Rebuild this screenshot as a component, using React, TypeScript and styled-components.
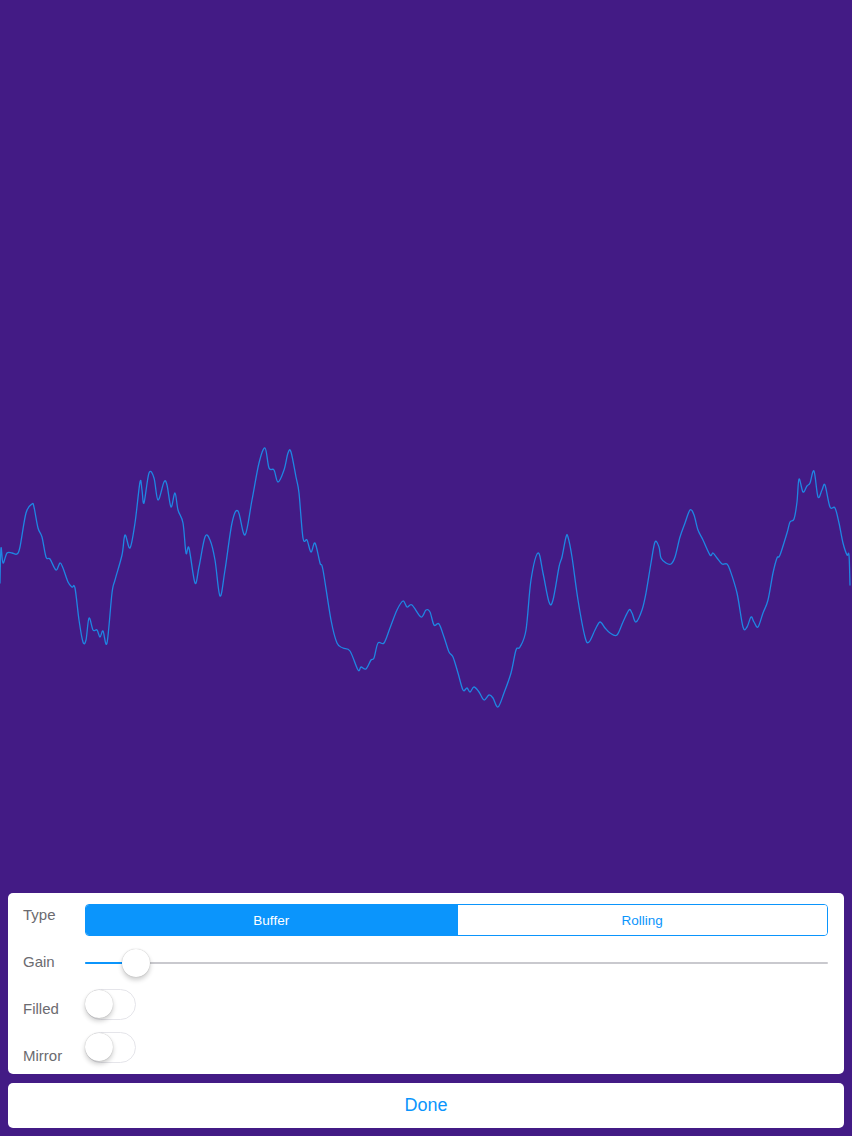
import React from "react";
import styled, { createGlobalStyle } from "styled-components";

const GlobalStyle = createGlobalStyle`
  html, body { margin: 0; padding: 0; }
  body {
    background: #431b85;
    font-family: "Helvetica Neue", "Liberation Sans", Arial, sans-serif;
    -webkit-font-smoothing: antialiased;
  }
`;

const BLUE = "#0b95fc";

const Page = styled.div`
  width: 852px;
  height: 1136px;
  display: flex;
  flex-direction: column;
  background: #431b85;
  overflow: hidden;
`;

const Plot = styled.div`
  flex: 1;
  min-height: 0;
  display: flex;
`;

const PlotSvg = styled.svg`
  width: 852px;
  height: 893px;
  display: block;
`;

const Bottom = styled.div`
  display: flex;
  flex-direction: column;
  gap: 9px;
  padding: 0 8px 8px 8px;
`;

const Card = styled.div`
  background: #ffffff;
  border-radius: 5px;
  display: grid;
  grid-template-columns: 62px 1fr;
  padding: 0 16px 0 15px;
  height: 181px;
  box-sizing: border-box;
`;

const LabelColumn = styled.div`
  display: flex;
  flex-direction: column;
  gap: 27px;
  padding-top: 12px;
`;

const Label = styled.div`
  font-size: 15px;
  line-height: 20px;
  height: 20px;
  color: #6b6b70;
`;

const ControlColumn = styled.div`
  display: flex;
  flex-direction: column;
  padding-top: 11px;
`;

const Segmented = styled.div`
  display: grid;
  grid-template-columns: 1fr 1fr;
  height: 32px;
  box-sizing: border-box;
  border: 1px solid ${BLUE};
  border-radius: 4px;
  overflow: hidden;
`;

const Segment = styled.div<{ $active?: boolean }>`
  display: flex;
  align-items: center;
  justify-content: center;
  font-size: 13.5px;
  color: ${(p) => (p.$active ? "#ffffff" : BLUE)};
  background: ${(p) => (p.$active ? BLUE : "#ffffff")};
  & + & {
    border-left: 1px solid ${BLUE};
  }
`;

const SliderRow = styled.div`
  position: relative;
  height: 28px;
  margin-top: 13px;
  display: flex;
  align-items: center;
`;

const Track = styled.div`
  flex: 1;
  height: 2px;
  border-radius: 1px;
  background: #c9c9ce;
`;

const TrackFill = styled.div`
  position: absolute;
  left: 0;
  top: 13px;
  height: 2px;
  border-radius: 1px;
  background: ${BLUE};
`;

const Thumb = styled.div`
  position: absolute;
  top: 0;
  width: 28px;
  height: 28px;
  border-radius: 50%;
  background: #fff;
  box-shadow: 0 3px 5px rgba(0, 0, 0, 0.2), 0 0 1px rgba(0, 0, 0, 0.3);
`;

const Switch = styled.div`
  position: relative;
  width: 51px;
  height: 31px;
  margin-top: 12px;
  box-sizing: border-box;
  border-radius: 16px;
  border: 1.5px solid #e5e5ea;
  background: #fff;
`;

const Knob = styled.div`
  position: absolute;
  left: -1px;
  top: 0px;
  width: 28px;
  height: 28px;
  border-radius: 50%;
  background: #fff;
  box-shadow: 0 3px 5px rgba(0, 0, 0, 0.2), 0 0 1px rgba(0, 0, 0, 0.3);
`;

const DoneButton = styled.button`
  height: 45px;
  border: none;
  border-radius: 5px;
  background: #ffffff;
  color: ${BLUE};
  font-size: 18px;
  font-family: inherit;
  padding: 0;
`;

const pts: [number, number][] = [
  [0, 583], [1, 548], [3, 563], [7, 553], [12, 553], [17, 554], [20, 547], [26, 513], [32, 504], [34, 507],
  [38, 528], [42, 537], [46, 557], [50, 559], [56, 570], [60, 563], [63, 568], [68, 582], [72, 587], [75, 588],
  [79, 620], [83, 642], [86, 640], [89, 618], [93, 630], [97, 630], [100, 637], [103, 631], [107, 643], [112, 593],
  [115, 580], [122, 555], [125, 535], [130, 548], [135, 523], [140, 482], [142, 490], [144, 503], [149, 473], [154, 478],
  [158, 500], [164, 482], [167, 485], [171, 507], [175, 493], [178, 510], [183, 523], [186, 553], [189, 548], [195, 583],
  [199, 567], [205, 537], [210, 540], [215, 560], [220, 596], [225, 570], [232, 523], [238, 511], [245, 535], [252, 500],
  [259, 463], [265, 448], [269, 468], [274, 470], [278, 482], [284, 470], [288, 453], [291, 452], [296, 477], [299, 493],
  [303, 538], [307, 540], [311, 552], [315, 543], [320, 563], [323, 570], [331, 620], [337, 643], [343, 648], [350, 651],
  [358, 670], [361, 667], [366, 669], [371, 660], [374, 658], [378, 643], [384, 643], [390, 628], [397, 610], [403, 601],
  [407, 607], [412, 605], [421, 617], [426, 610], [430, 612], [434, 625], [439, 624], [444, 637], [449, 652], [453, 657],
  [458, 673], [463, 690], [467, 688], [470, 692], [474, 687], [479, 692], [484, 700], [489, 695], [493, 698], [498, 707],
  [504, 693], [511, 673], [516, 650], [520, 647], [526, 630], [531, 580], [538, 553], [543, 573], [549, 602], [553, 600],
  [559, 567], [562, 557], [566, 537], [568, 537], [572, 557], [578, 600], [585, 637], [589, 642], [595, 630], [600, 622],
  [605, 628], [610, 633], [617, 635], [623, 622], [629, 610], [632, 613], [636, 622], [642, 610], [646, 593], [651, 563],
  [655, 542], [659, 547], [661, 558], [666, 563], [671, 564], [675, 557], [680, 537], [685, 523], [690, 510], [694, 515],
  [698, 530], [703, 540], [710, 555], [713, 553], [717, 558], [722, 564], [727, 564], [730, 570], [737, 593], [743, 627],
  [747, 627], [751, 617], [754, 622], [758, 627], [763, 613], [768, 600], [773, 573], [777, 558], [780, 555], [787, 533],
  [790, 522], [794, 519], [797, 502], [799, 479], [803, 492], [807, 486], [810, 483], [814, 471], [818, 497], [822, 490],
  [825, 485], [830, 507], [835, 508], [839, 523], [843, 543], [847, 555], [849, 555], [850, 585],
];

// Catmull-Rom to cubic bezier for a smoother trace
function smoothPath(p: [number, number][]): string {
  let d = `M${p[0][0]} ${p[0][1]}`;
  const t = 0.5 / 3;
  for (let i = 0; i < p.length - 1; i++) {
    const p0 = p[i - 1] || p[i];
    const p1 = p[i];
    const p2 = p[i + 1];
    const p3 = p[i + 2] || p2;
    const c1x = p1[0] + (p2[0] - p0[0]) * t;
    const c1y = p1[1] + (p2[1] - p0[1]) * t;
    const c2x = p2[0] - (p3[0] - p1[0]) * t;
    const c2y = p2[1] - (p3[1] - p1[1]) * t;
    d += ` C${c1x.toFixed(2)} ${c1y.toFixed(2)} ${c2x.toFixed(2)} ${c2y.toFixed(2)} ${p2[0]} ${p2[1]}`;
  }
  return d;
}

const wavePath = smoothPath(pts);

export default function App() {
  const thumbCenter = 51;
  return (
    <Page>
      <GlobalStyle />
      <Plot>
        <PlotSvg viewBox="0 0 852 893">
          <path
            d={wavePath}
            fill="none"
            stroke="#1f86e2"
            strokeWidth={1.3}
            strokeLinejoin="round"
            strokeLinecap="round"
          />
        </PlotSvg>
      </Plot>
      <Bottom>
        <Card>
          <LabelColumn>
            <Label>Type</Label>
            <Label>Gain</Label>
            <Label>Filled</Label>
            <Label>Mirror</Label>
          </LabelColumn>
          <ControlColumn>
            <Segmented>
              <Segment $active>Buffer</Segment>
              <Segment>Rolling</Segment>
            </Segmented>
            <SliderRow>
              <Track />
              <TrackFill style={{ width: thumbCenter }} />
              <Thumb style={{ left: thumbCenter - 14 }} />
            </SliderRow>
            <Switch>
              <Knob />
            </Switch>
            <Switch>
              <Knob />
            </Switch>
          </ControlColumn>
        </Card>
        <DoneButton>Done</DoneButton>
      </Bottom>
    </Page>
  );
}
